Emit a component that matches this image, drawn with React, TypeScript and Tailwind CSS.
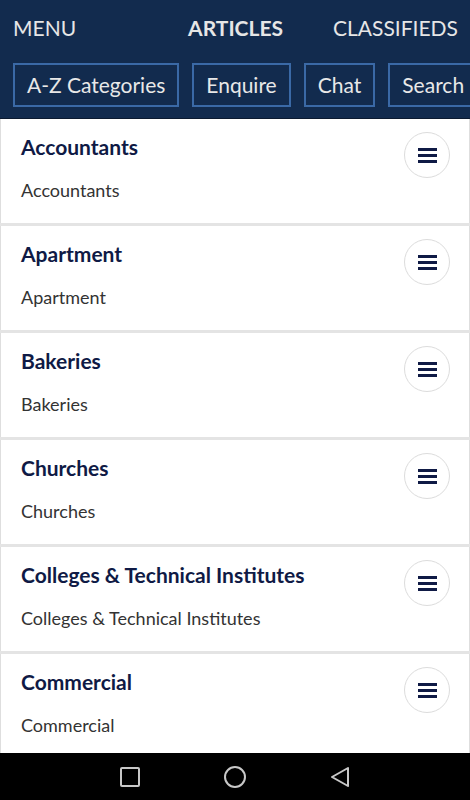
import type { ReactNode } from "react";

const categories = [
  "Accountants",
  "Apartment",
  "Bakeries",
  "Churches",
  "Colleges & Technical Institutes",
  "Commercial",
];

const actions = ["A-Z Categories", "Enquire", "Chat", "Search"];

function MenuButton() {
  return (
    <button className="w-[46px] h-[46px] rounded-full border border-[#dcdcdc] bg-white flex flex-col items-center justify-center gap-[3px] shrink-0">
      <span className="block w-[19px] h-[3px] bg-[#0f1a45]" />
      <span className="block w-[19px] h-[3px] bg-[#0f1a45]" />
      <span className="block w-[19px] h-[3px] bg-[#0f1a45]" />
    </button>
  );
}

function NavIcon({ children }: { children: ReactNode }) {
  return <div className="w-[24px] h-[24px] flex items-center justify-center">{children}</div>;
}

export default function App() {
  return (
    <div className="w-[470px] h-[800px] flex flex-col overflow-hidden bg-[#e4e4e4] font-['Lato',sans-serif]">
      {/* Header */}
      <header className="bg-[#122b4e] border-b border-[#0b1a30] shrink-0">
        <div className="h-[56px] flex items-center pl-[13px] text-[21px] text-[#e6e6e6] whitespace-nowrap">
          <span>MENU</span>
          <span className="ml-[112px] font-bold">ARTICLES</span>
          <span className="ml-[50px]">CLASSIFIEDS</span>
        </div>
        <div className="flex gap-[13px] pl-[13px] pt-[7px] pb-[11px] overflow-hidden whitespace-nowrap">
          {actions.map((a) => (
            <button
              key={a}
              className="h-[44px] px-[12px] border-2 border-[#3a69a6] text-[21px] text-[#e8e8e8] shrink-0"
            >
              {a}
            </button>
          ))}
        </div>
      </header>

      {/* List */}
      <main className="flex-1 flex flex-col gap-[3px] overflow-hidden">
        {categories.map((c) => (
          <div
            key={c}
            className="h-[104px] shrink-0 bg-white border-x border-[#dedede] flex justify-between pl-[20px] pr-[19px] pt-[13px]"
          >
            <div className="flex flex-col">
              <h2 className="text-[21px] leading-[30px] font-bold text-[#0f1a45]">{c}</h2>
              <p className="mt-[16px] text-[18px] leading-[24px] text-[#333333]">{c}</p>
            </div>
            <div>
              <MenuButton />
            </div>
          </div>
        ))}
      </main>

      {/* Android nav bar */}
      <footer className="h-[47px] bg-black shrink-0 flex items-center justify-center gap-[81px]">
        <NavIcon>
          <div className="w-[20px] h-[20px] border-2 border-[#c8c8c8] rounded-[2px]" />
        </NavIcon>
        <NavIcon>
          <div className="w-[22px] h-[22px] border-2 border-[#c8c8c8] rounded-full" />
        </NavIcon>
        <NavIcon>
          <svg width="20" height="22" viewBox="0 0 20 22" fill="none">
            <path d="M18 2 L2 11 L18 20 Z" stroke="#c8c8c8" strokeWidth="2" strokeLinejoin="round" />
          </svg>
        </NavIcon>
      </footer>
    </div>
  );
}
